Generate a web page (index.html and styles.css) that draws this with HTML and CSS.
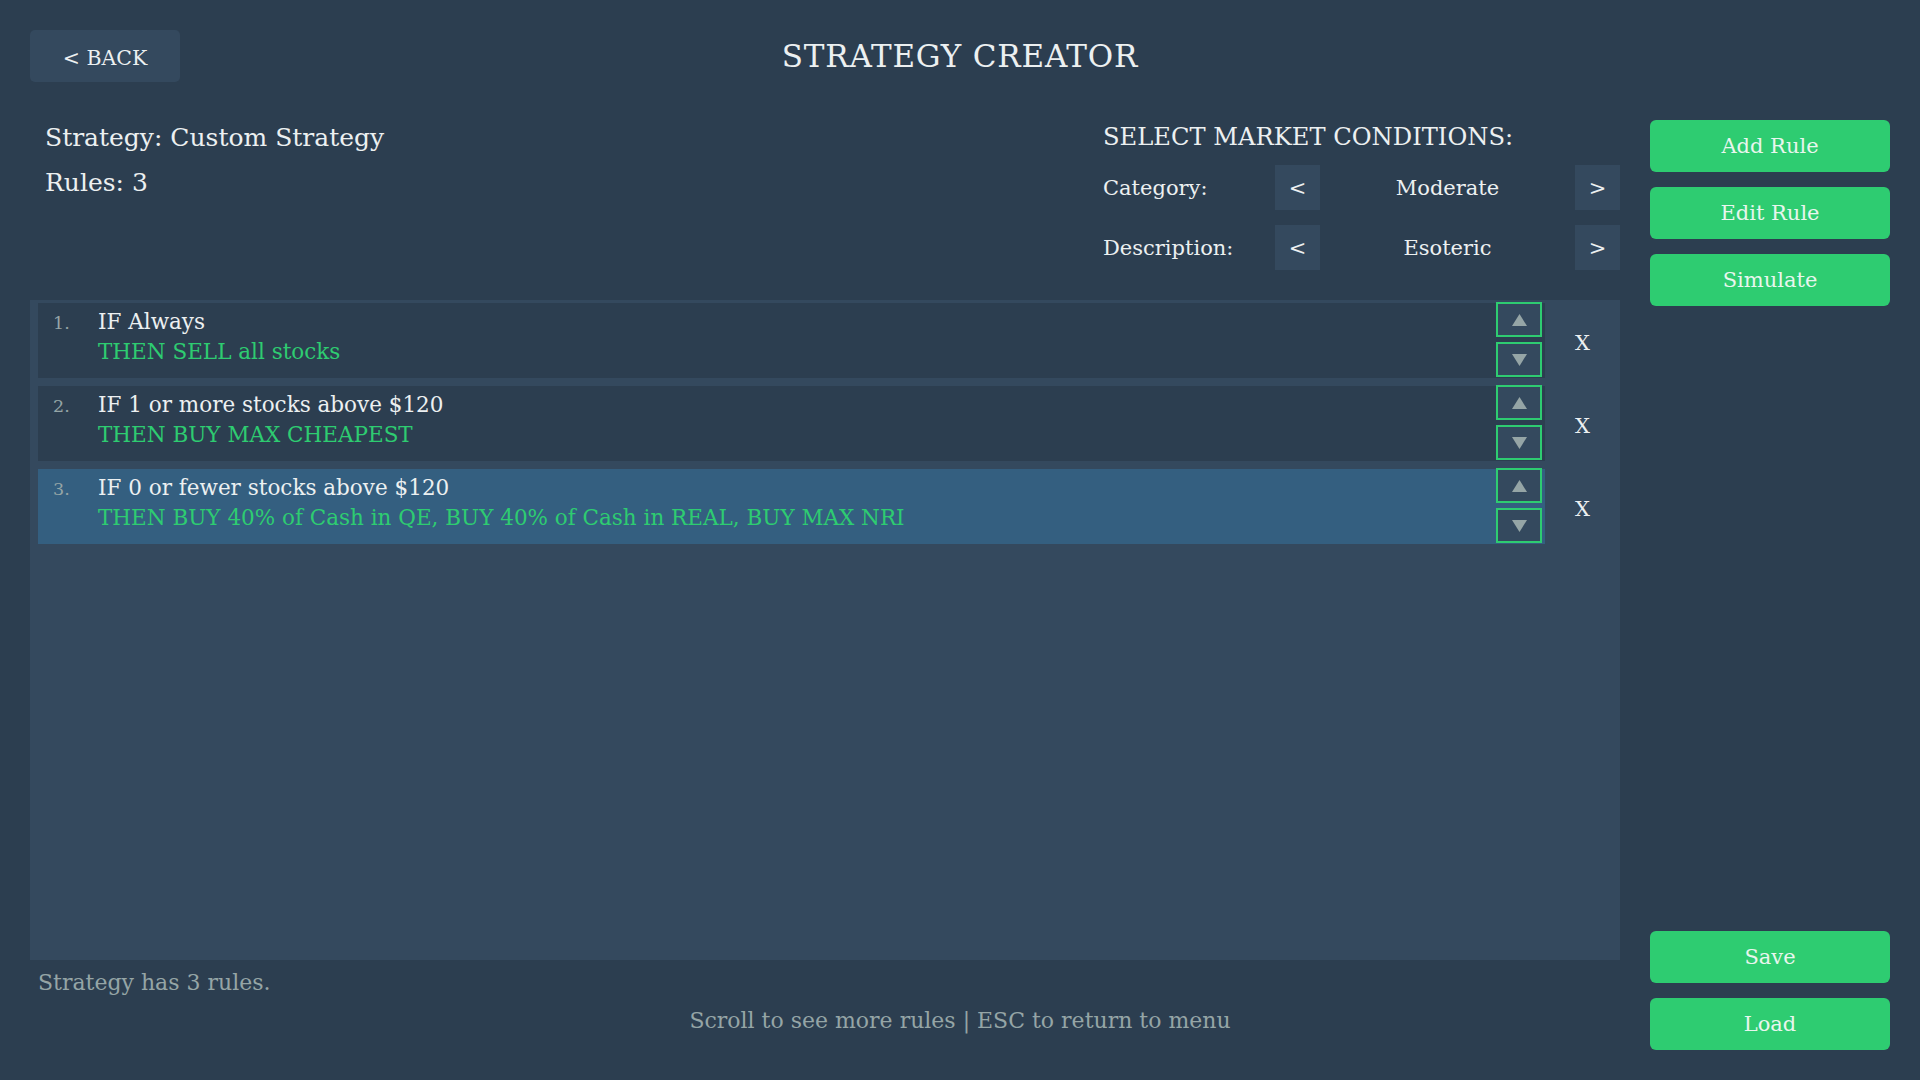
FILE: index.html
```html
<!DOCTYPE html>
<html lang="en">
<head>
    <meta charset="UTF-8">
    <meta name="viewport" content="width=device-width, initial-scale=1.0">
    <title>Strategy Creator</title>
    <link rel="stylesheet" href="styles.css">
</head>
<body>
<div class="page">

    <div class="header">
        <div><button class="back">&lt; BACK</button></div>
        <h1 class="title">STRATEGY CREATOR</h1>
        <div></div>
    </div>

    <div class="info">
        <div class="summary">
            <div>Strategy: Custom Strategy</div>
            <div>Rules: 3</div>
        </div>
        <div class="market">
            <div class="market-head">SELECT MARKET CONDITIONS:</div>
            <div class="selector">
                <span class="sel-label">Category:</span>
                <button class="sel-btn">&lt;</button>
                <span class="sel-value">Moderate</span>
                <button class="sel-btn">&gt;</button>
            </div>
            <div class="selector">
                <span class="sel-label">Description:</span>
                <button class="sel-btn">&lt;</button>
                <span class="sel-value">Esoteric</span>
                <button class="sel-btn">&gt;</button>
            </div>
        </div>
    </div>

    <div class="panel">
        <div class="rule">
            <div class="rule-box">
                <span class="rule-num">1.</span>
                <div class="rule-text">
                    <div class="rule-if">IF Always</div>
                    <div class="rule-then">THEN SELL all stocks</div>
                </div>
                <div class="arrows">
                    <button class="arrow"><svg width="15" height="12" viewBox="0 0 15 12"><polygon points="7.5,0 15,12 0,12"/></svg></button>
                    <button class="arrow"><svg width="15" height="12" viewBox="0 0 15 12"><polygon points="0,0 15,0 7.5,12"/></svg></button>
                </div>
            </div>
            <div class="remove">X</div>
        </div>

        <div class="rule">
            <div class="rule-box">
                <span class="rule-num">2.</span>
                <div class="rule-text">
                    <div class="rule-if">IF 1 or more stocks above $120</div>
                    <div class="rule-then">THEN BUY MAX CHEAPEST</div>
                </div>
                <div class="arrows">
                    <button class="arrow"><svg width="15" height="12" viewBox="0 0 15 12"><polygon points="7.5,0 15,12 0,12"/></svg></button>
                    <button class="arrow"><svg width="15" height="12" viewBox="0 0 15 12"><polygon points="0,0 15,0 7.5,12"/></svg></button>
                </div>
            </div>
            <div class="remove">X</div>
        </div>

        <div class="rule">
            <div class="rule-box selected">
                <span class="rule-num">3.</span>
                <div class="rule-text">
                    <div class="rule-if">IF 0 or fewer stocks above $120</div>
                    <div class="rule-then">THEN BUY 40% of Cash in QE, BUY 40% of Cash in REAL, BUY MAX NRI</div>
                </div>
                <div class="arrows">
                    <button class="arrow"><svg width="15" height="12" viewBox="0 0 15 12"><polygon points="7.5,0 15,12 0,12"/></svg></button>
                    <button class="arrow"><svg width="15" height="12" viewBox="0 0 15 12"><polygon points="0,0 15,0 7.5,12"/></svg></button>
                </div>
            </div>
            <div class="remove">X</div>
        </div>
    </div>

    <div class="status">Strategy has 3 rules.</div>
    <div class="hint">Scroll to see more rules | ESC to return to menu</div>

    <div class="side">
        <div class="side-group">
            <button class="green">Add Rule</button>
            <button class="green">Edit Rule</button>
            <button class="green">Simulate</button>
        </div>
        <div class="side-group">
            <button class="green">Save</button>
            <button class="green">Load</button>
        </div>
    </div>

</div>
</body>
</html>
```

FILE: styles.css
```css
* {
    box-sizing: border-box;
}
body {
    margin: 0;
    background-color: #2c3e50;
    color: #ecf0f1;
    font-family: "DejaVu Serif", "Liberation Serif", serif;
}
button {
    font-family: inherit;
    border: none;
    padding: 0;
    cursor: pointer;
}
.page {
    height: 1080px;
    padding: 30px;
    display: grid;
    grid-template-columns: 1fr 240px;
    grid-template-rows: 52px auto 1fr auto auto;
    column-gap: 30px;
}

/* header */
.header {
    grid-column: 1 / -1;
    grid-row: 1;
    display: grid;
    grid-template-columns: 1fr auto 1fr;
    align-items: center;
}
.back {
    width: 150px;
    height: 52px;
    padding-top: 4px;
    background-color: #34495e;
    color: #ecf0f1;
    border-radius: 5px;
    font-size: 20.5px;
}
.title {
    margin: 0;
    font-size: 31px;
    letter-spacing: 0.8px;
    font-weight: normal;
    line-height: 52px;
}

/* strategy info + market conditions */
.info {
    grid-column: 1;
    grid-row: 2;
    margin-top: 33px;
    display: flex;
    justify-content: space-between;
}
.summary {
    padding-left: 15px;
    font-size: 25px;
    line-height: 45px;
}
.market {
    width: 517px;
}
.market-head {
    font-size: 24.2px;
    line-height: 45px;
    margin-bottom: 5px;
}
.selector {
    display: grid;
    grid-template-columns: 172px 45px 1fr 45px;
    align-items: center;
    height: 45px;
    margin-bottom: 15px;
    font-size: 21px;
}
.selector:last-child {
    margin-bottom: 0;
}
.sel-btn {
    width: 45px;
    height: 45px;
    background-color: #34495e;
    color: #ecf0f1;
    font-size: 21px;
}
.sel-value {
    text-align: center;
}

/* rule list */
.panel {
    grid-column: 1;
    grid-row: 3;
    margin-top: 30px;
    height: 660px;
    background-color: #34495e;
    padding: 3px 0 0 8px;
    display: flex;
    flex-direction: column;
    gap: 8px;
}
.rule {
    display: flex;
    align-items: center;
}
.rule-box {
    flex: 1;
    height: 75px;
    display: flex;
    background-color: #2c3e50;
    padding: 4px 3px 0 15px;
}
.rule-box.selected {
    background-color: #345f80;
}
.rule-num {
    width: 45px;
    font-size: 17.5px;
    line-height: 30px;
    color: #95a5a6;
    padding-top: 1px;
}
.rule-text {
    flex: 1;
    font-size: 21.5px;
    line-height: 30px;
}
.rule-then {
    color: #2ecc71;
}
.arrows {
    margin-top: -5px;
    display: flex;
    flex-direction: column;
    gap: 5px;
}
.arrow {
    width: 46px;
    height: 35px;
    background-color: #34495e;
    border: 2px solid #2ecc71;
    display: flex;
    align-items: center;
    justify-content: center;
}
.arrow svg {
    fill: #95a5a6;
}
.remove {
    width: 75px;
    text-align: center;
    font-size: 21px;
    padding-top: 5px;
}

/* footer lines */
.status {
    grid-column: 1;
    grid-row: 4;
    margin-top: 8px;
    padding-left: 8px;
    font-size: 22px;
    line-height: 30px;
    color: #95a5a6;
}
.hint {
    grid-column: 1 / -1;
    grid-row: 5;
    margin-top: 8px;
    padding-bottom: 14px;
    text-align: center;
    font-size: 22px;
    line-height: 30px;
    color: #95a5a6;
}

/* side buttons */
.side {
    grid-column: 2;
    grid-row: 2 / -1;
    padding-top: 38px;
    display: flex;
    flex-direction: column;
    justify-content: space-between;
}
.side-group {
    display: flex;
    flex-direction: column;
    gap: 15px;
}
.green {
    height: 52px;
    background-color: #2ecc71;
    color: #e8f6ee;
    border-radius: 6px;
    font-size: 21px;
}
```
